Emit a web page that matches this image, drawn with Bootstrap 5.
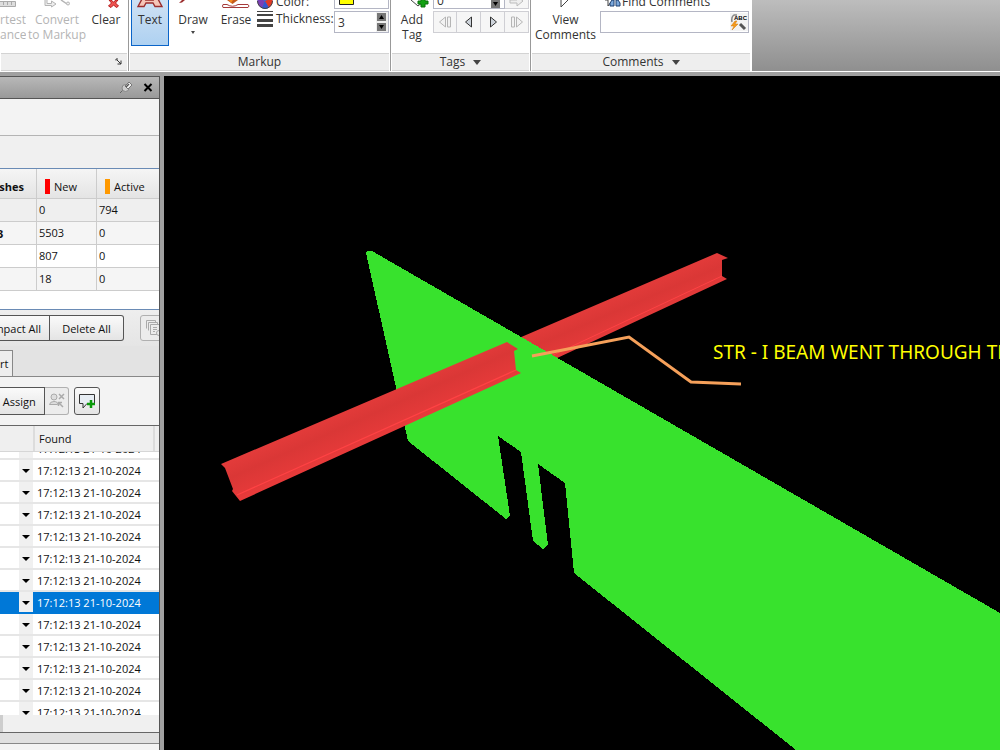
<!DOCTYPE html>
<html lang="en">
<head>
<meta charset="utf-8">
<meta name="viewport" content="width=device-width, initial-scale=1">
<title>Clash review</title>
<link rel="stylesheet" href="https://cdn.jsdelivr.net/npm/bootstrap@5.3.0/dist/css/bootstrap.min.css">
<script src="https://cdn.jsdelivr.net/npm/bootstrap@5.3.0/dist/js/bootstrap.bundle.min.js"></script>
<style>
body { font: 12px/15px "Open Sans", sans-serif; color: #333; background: #a0a0a0; }
svg { display: block; flex: none; }
button, input { font: inherit; color: inherit; }
/* ribbon */
.ribbon { background: linear-gradient(#bdbdbd, #8f8f8f); border-bottom: 1px solid #fff; }
.rib-panel { background: #fff; border-right: 1px solid #999; flex: none; }
.rib-panel:last-of-type { border-right-color: #fff; }
.p-measure { width: 129px; } .p-markup { width: 262px; } .p-tags { width: 140px; } .p-comments { width: 221px; }
.rib-body { height: 53px; }
.p-markup .rib-body { padding: 0 1px 0 2px; }
.rib-title { height: 18px; line-height: 16px; background: #eee; border-top: 1px solid #d3d3d3; border-bottom: 1px solid #d3d3d3; margin: 0 1px; }
.tool { border: 0; background: none; padding: 0; width: 38px; white-space: nowrap; flex: none; }
.tool:disabled { color: #b4b4b4; }
.tool.picked { background: linear-gradient(#cfe1f4, #aed1f1); border: 1px solid #0a64c8; border-top: 0; padding-bottom: 18px; }
.w-cut { width: 26px; } .w-convert { width: 62px; } .w-clear { width: 36px; } .w-draw { width: 48px; }
.w-tag { width: 42px; } .w-view { width: 69px; }
.line-opts { padding-left: 2px; }
.line-opts label { margin-left: 3px; }
.combo { width: 55px; }
.row-top { height: 9px; overflow: hidden; margin-bottom: 2px; }
.row-low { height: 22px; }
.field { border: 1px solid #b4b6c4; background: #fff; }
.field input { border: 0; background: none; min-width: 0; padding: 0 3px; outline: 0; }
.tag-no { width: 72px; height: 22px; }
.spin { width: 9px; height: 8px; background: #777; border: 0; padding: 0; }
.spins { padding: 0 2px 0 1px; background: #f0f0f0; }
.step { width: 24px; height: 22px; border: 1px solid #cfcfd4; border-left-width: 0; background: #f6f6f6; padding: 0; }
.step:first-child { border-left-width: 1px; }
.find { width: 149px; }
.arrow { width: 0; height: 0; border: 4px solid transparent; border-top: 5px solid #444; border-bottom: 0; }
.arrow-s { border-width: 3px 2px 0; }
/* clash panel */
.side { width: 160px; margin-right: 4px; border-right: 1px solid #555; background: #f3f3f3; color: #111; font-size: 11px; }
.side-head { height: 23px; border-top: 1px solid #555; border-bottom: 1px solid #555; background: linear-gradient(#b8b8b8, #999); }
.side-head button { border: 0; background: none; padding: 0; }
.band-a { height: 37px; border-bottom: 1px solid #b4b4b4; }
.band-b { height: 33px; border-bottom: 1px solid #6a8bb5; background: #f0f0f0; }
.tests { height: 141px; background: #fff; border-bottom: 1px solid #6a8bb5; }
.tests table { table-layout: fixed; width: 100%; border-collapse: separate; border-spacing: 0; }
.col-total { width: 37px; } .col-new { width: 60px; }
.tests th, .tests td { height: 23px; padding: 0 2px 1px; border: 0 solid #ccc; border-width: 0 1px 1px 0; font-weight: 400; white-space: nowrap; overflow: hidden; }
.tests th { height: 30px; padding: 6px 0 0 8px; background: linear-gradient(#f5f5f5, #e4e4e4); }
.tests th:first-child { font-weight: 700; padding: 6px 12px 0 0; }
.tests td:first-child { font-weight: 700; padding: 0; text-indent: -3px; }
.tests th:last-child, .tests td:last-child { border-right: 0; }
.tests tbody tr:nth-child(even) { background: #f5f5f5; }
.tests tbody tr:first-child { background: #efefef; }
.chip { width: 5px; height: 15px; }
.chip-new { background: #f00; } .chip-active { background: #ff9900; }
.acts { height: 36px; background: linear-gradient(#eee, #e5e5e5); padding-top: 5px; }
.tabs-line { height: 31px; background: #e3e3e3; border-bottom: 1px solid #888; }
.tab-cut { width: 13px; height: 26px; border: 1px solid #888; border-left: 0; border-bottom: 0; background: #eee; padding: 0; }
.bar { height: 49px; border-bottom: 1px solid #666; padding-top: 10px; background: #f3f3f3; }
.pbtn { border: 1px solid #555; border-radius: 3px; background: linear-gradient(#fafafa, #e4e4e4); height: 26px; padding: 0; white-space: nowrap; overflow: hidden; flex: none; }
.bar .pbtn { height: 28px; }
.pbtn.off { border-color: #b0b0b0; background: #ececec; }
.cut-l { border-left: 0; border-radius: 0; }
.b-compact { width: 50px; } .b-delete { width: 74px; } .b-group { width: 28px; }
.b-assign { width: 45px; } .b-unassign { width: 24px; } .b-comment { width: 26px; margin-left: 5px; }
.list-head { height: 26px; background: #efefef; border-bottom: 1px solid #d6d6d6; }
.list-head span { border-right: 2px solid #dcdcdc; }
.col-menu { width: 35px; }
.found-list { height: 263px; background: #fff; overflow: hidden; }
.found-row { height: 22px; border-bottom: 2px solid #e6e6e6; padding-left: 19px; }
.found-row.current { background: #0078d7; color: #fff; border-color: #0078d7; }
.found-row .dd { width: 14px; height: 20px; background: #f0f0f0; border: 0; padding: 2px 0 0 3px; margin-right: 4px; }
.dd .arrow { border-top: 4px solid #000; }
.hbar { height: 18px; border-bottom: 1px solid #666; background: #f0f0f0; }
.hbar div { width: 3px; background: #cdcdcd; }
.split { height: 11px; background: #e0e0e0; border-bottom: 1px solid #888; }
.scene { background: #000; min-width: 0; overflow: hidden; }
.note { font: 19px "Noto Sans", sans-serif; fill: #ff0; }
</style>
</head>
<body class="vh-100 d-flex flex-column overflow-hidden">
<header class="ribbon d-flex">
  <section class="rib-panel p-measure d-flex flex-column">
    <div class="rib-body d-flex align-items-start">
      <button class="tool w-cut text-start overflow-hidden" disabled>
        <svg width="18" height="12" viewBox="0 0 18 12"><path d="M-2 1.500H15.500V6.500H-2" fill="#ddd" stroke="#aaa"/><path d="M3.500 2v3M7.500 2v3M11.500 2v3" stroke="#aaa"/></svg>
        rtest<br>ance</button>
      <button class="tool w-convert" disabled>
        <svg class="mx-auto" width="30" height="12" viewBox="0 0 30 12"><path d="M5 0V3.500H9.500V1L14 4L9.500 7V5.500H3V0" fill="#eee" stroke="#b4b4b4"/><path d="M19 0L25 4" stroke="#b4b4b4" stroke-width="1.500"/><circle cx="26" cy="3.500" r="1.500" fill="#eee" stroke="#b4b4b4"/></svg>
        Convert<br>to Markup</button>
      <button class="tool w-clear">
        <svg class="ms-auto me-1" width="12" height="12" viewBox="0 0 12 12"><path d="M3 0L5.500 2L8 0H10L7.500 3L10.500 6L8.500 7.500L5.500 5L3 7.500L0.500 6L3.500 3L1 0Z" fill="#ef5350" stroke="#b71c1c"/></svg>
        Clear</button>
    </div>
    <div class="rib-title d-flex justify-content-end align-items-center pe-1"><svg width="8" height="8" viewBox="0 0 8 8"><path d="M1 2.500V1H3M2 2L6 6M2.500 6H6V2.500" stroke="#333" fill="none"/></svg></div>
  </section>
  <section class="rib-panel p-markup d-flex flex-column">
    <div class="rib-body d-flex align-items-start">
      <button class="tool picked">
        <svg class="mx-auto" width="28" height="12" viewBox="0 0 28 12"><path d="M6 -1L2 6.500H8L10 3H17L19 6.500H26L22 -1H16.500L17 0H10L10.500 -1Z" fill="#f6c5b8" stroke="#9b2d2d" stroke-width="1.400"/></svg>
        Text</button>
      <button class="tool w-draw">
        <svg class="mx-auto" width="28" height="12" viewBox="0 0 28 12"><path d="M0 3L4 -1L6 0L3 2.500Z" fill="#9b2d2d"/></svg>
        Draw<div class="arrow arrow-s mx-auto mt-1"></div></button>
      <button class="tool">
        <svg class="mx-auto" width="30" height="12" viewBox="0 0 30 12"><path d="M6 0H17L11.500 4Z" fill="#c45a1c"/><path d="M8 0H12L10 3Z" fill="#f68b1f"/><path d="M6 4.500H2Q1 6 2 7.500H27Q29 6 27 4.500H17Q11.500 8 6 4.500Z" fill="#fff" stroke="#a53a3a"/></svg>
        Erase</button>
      <div class="line-opts flex-grow-1">
        <div class="row-top d-flex align-items-end">
          <svg width="16" height="9" viewBox="0 7 16 9"><circle cx="8" cy="8" r="7.500" fill="#3f6fd0"/><path d="M8 8L1 5Q-1 12 5 15Z" fill="#7b3fb5"/><path d="M8 8L5 15Q9 17 12 14.500Z" fill="#3557cf"/><path d="M8 8L12 14.500Q17 11 15 5Z" fill="#e23a24"/><path d="M0.500 8A7.500 7.500 0 0 0 15.500 8" fill="none" stroke="#444"/></svg>
          <label for="swatch">Color:</label>
          <button id="swatch" class="field combo ms-auto p-0 ps-1" aria-label="Yellow"><svg width="15" height="9" viewBox="0 0 15 9"><path d="M.5 -1V5.500H14.500V-1" fill="#ff0" stroke="#222"/></svg></button>
        </div>
        <div class="row-low d-flex">
          <svg width="16" height="16" viewBox="0 0 16 16"><path d="M0 0h16v1H0zM0 3h16v2H0zM0 8h16v3H0zM0 13h16v3H0z" fill="#444"/></svg>
          <label class="text-nowrap" for="thick">Thickness:</label>
          <div class="field combo d-flex ms-auto flex-shrink-0"><input id="thick" class="w-100" value="3">
            <div class="spins d-flex flex-column justify-content-around">
              <button class="spin" aria-label="Up"><svg width="9" height="8"><path d="M2 6L4.500 2L7 6Z"/></svg></button>
              <button class="spin" aria-label="Down"><svg width="9" height="8"><path d="M2 2L4.500 6L7 2Z"/></svg></button>
            </div></div>
        </div>
      </div>
    </div>
    <div class="rib-title text-center">Markup</div>
  </section>
  <section class="rib-panel p-tags d-flex flex-column">
    <div class="rib-body d-flex align-items-start">
      <button class="tool w-tag">
        <svg class="ms-auto" width="26" height="12" viewBox="0 0 26 12"><path d="M4 0L11 6L17 1" fill="#fff" stroke="#444"/><path d="M11 1H14V-2H18V1H21V4H18V7H14V4H11Z" fill="#12a012" stroke="#087008"/></svg>
        Add<br>Tag</button>
      <div>
        <div class="row-top d-flex align-items-end">
          <div class="field tag-no d-flex align-items-end"><input class="w-100" value="0" aria-label="Tag number"><button class="spin me-1 flex-shrink-0" aria-label="Down"><svg width="9" height="8"><path d="M2 2L4.500 6L7 2Z"/></svg></button></div>
          <button class="step" disabled aria-label="Go"><svg class="mx-auto" width="16" height="18"><path d="M1 11H8V7L14 12L8 17V14H1Z" fill="#eee" stroke="#bbb"/></svg></button>
        </div>
        <div class="row-low d-flex">
          <button class="step" disabled aria-label="First"><svg class="mx-auto" width="14" height="14"><path d="M7.500 2V12L1.500 7ZM9.500 2h3v10h-3z" fill="#f2f2f2" stroke="#b5b5b5"/></svg></button>
          <button class="step" aria-label="Previous"><svg class="mx-auto" width="14" height="14"><path d="M9.500 2V12L3.500 7Z" fill="#cdd3da" stroke="#333"/></svg></button>
          <button class="step" aria-label="Next"><svg class="mx-auto" width="14" height="14"><path d="M4.500 2V12L10.500 7Z" fill="#cdd3da" stroke="#333"/></svg></button>
          <button class="step" disabled aria-label="Last"><svg class="mx-auto" width="14" height="14"><path d="M6.500 2V12L12.500 7ZM1.500 2h3v10h-3z" fill="#f2f2f2" stroke="#b5b5b5"/></svg></button>
        </div>
      </div>
    </div>
    <div class="rib-title d-flex justify-content-center align-items-center"><span class="me-2">Tags</span><span class="arrow"></span></div>
  </section>
  <section class="rib-panel p-comments d-flex flex-column">
    <div class="rib-body d-flex align-items-start">
      <button class="tool w-view"><svg class="mx-auto" width="20" height="12"><path d="M5 0V7L12 0" fill="#fff" stroke="#444"/></svg>View<br>Comments</button>
      <div class="find">
        <div class="row-top d-flex align-items-end ps-1">
          <svg width="18" height="9" viewBox="0 0 18 9"><path d="M1 0H4V6L7 2" fill="none" stroke="#444"/><path d="M6 6V3L8 0H10V6ZM12 6V0H14L16 3V6Z" fill="#7aa8dc" stroke="#1d3f6e"/></svg>
          <label for="find">Find Comments</label></div>
        <div class="row-low field d-flex align-items-center"><input id="find" class="w-100">
          <svg width="18" height="18" viewBox="0 0 18 18"><rect width="18" height="18" fill="#f3f3f3"/><path d="M7 2H4Q1 4 2 9" fill="none" stroke="#888" stroke-width="1.500"/><path d="M10 11L15 16" stroke="#555" stroke-width="3"/><path d="M5 8L1 13H4L2 17L8 11H5L7 8Z" fill="#f59a1c" stroke="#d37b0a" stroke-width=".5"/><text x="4" y="7" font-size="6" font-weight="700" font-family="Liberation Sans, sans-serif" fill="#000">ABC</text></svg>
        </div>
      </div>
    </div>
    <div class="rib-title d-flex justify-content-center align-items-center"><span class="me-2">Comments</span><span class="arrow"></span></div>
  </section>
</header>

<div class="d-flex flex-grow-1 mt-1 overflow-hidden">
  <aside class="side flex-shrink-0 overflow-hidden">
    <div class="side-head d-flex justify-content-end align-items-center gap-2 pe-1">
      <button aria-label="Pin"><svg width="14" height="14" viewBox="0 0 14 14"><path d="M1 12L5 8" stroke="#666"/><circle cx="6.500" cy="7" r="3.500" fill="#ccc" stroke="#888"/><path d="M6 5L10 1L13 4L9 8Z" fill="#eee" stroke="#777"/><path d="M7 6L10 3" stroke="#555" stroke-width="1.500"/></svg></button>
      <button aria-label="Close"><svg width="14" height="12" viewBox="0 0 14 12"><path d="M3.500 2L10.500 9M10.500 2L3.500 9" stroke="#000" stroke-width="2"/></svg></button>
    </div>
    <div class="band-a"></div>
    <div class="band-b"></div>
    <div class="tests">
      <table>
        <colgroup><col class="col-total"><col class="col-new"><col></colgroup>
        <thead><tr><th><div class="d-flex justify-content-end">ashes</div></th><th><div class="d-flex align-items-center gap-1"><i class="chip chip-new"></i>New</div></th><th><div class="d-flex align-items-center gap-1"><i class="chip chip-active"></i>Active</div></th></tr></thead>
        <tbody>
          <tr><td></td><td>0</td><td>794</td></tr>
          <tr><td>3</td><td>5503</td><td>0</td></tr>
          <tr><td></td><td>807</td><td>0</td></tr>
          <tr><td></td><td>18</td><td>0</td></tr>
        </tbody>
      </table>
    </div>
    <div class="acts d-flex">
      <button class="pbtn b-compact cut-l d-flex justify-content-end align-items-center pe-2">mpact All</button>
      <button class="pbtn b-delete rounded-start-0 border-start-0">Delete All</button>
      <button class="pbtn b-group off ms-3 ps-1" aria-label="Group" disabled><svg width="18" height="18" viewBox="0 0 18 18"><path d="M1.500 9.500V1.500H10.500V3.500M3.500 11.500V3.500H12.500V5.500M5.500 5.500H14.500V15.500H5.500ZM8 8.500H12M8 10.500H12M8 12.500H10" fill="none" stroke="#aaa"/><circle cx="14" cy="14" r="2.500" fill="#ececec" stroke="#aaa"/></svg></button>
    </div>
    <div class="tabs-line d-flex align-items-end"><button class="tab-cut text-start overflow-hidden">rt</button></div>
    <div class="bar d-flex">
      <button class="pbtn b-assign cut-l text-start">&nbsp;Assign</button>
      <button class="pbtn b-unassign off rounded-start-0 border-start-0 ps-1" aria-label="Unassign" disabled><svg width="16" height="18" viewBox="0 0 16 18"><circle cx="5" cy="5" r="3" fill="#ddd" stroke="#aaa"/><path d="M.5 12.500Q1 9.500 5 9.500T8.500 12.500Z" fill="#ddd" stroke="#aaa"/><path d="M10 2L15 7M15 2L10 7M9.500 14V10.500H13M10 11L14 15" stroke="#aaa" stroke-width="1.500" fill="none"/></svg></button>
      <button class="pbtn b-comment" aria-label="Add comment"><svg class="mx-auto" width="18" height="18" viewBox="0 0 18 18"><path d="M1.500 2.500H16.500V11.500H9L5 16V11.500H1.500Z" fill="#e7edf3" stroke="#333"/><path d="M9 12H17M13 8V16" stroke="#0a9a0a" stroke-width="2.500"/></svg></button>
    </div>
    <div class="list-head d-flex align-items-stretch"><span class="col-menu"></span><span class="flex-grow-1 ps-1 me-1 d-flex align-items-center">Found</span></div>
    <div class="found-list d-flex flex-column" id="found"></div>
    <div class="hbar d-flex"><div></div></div>
    <div class="split"></div>
  </aside>

  <main class="scene flex-grow-1">
    <svg class="w-100 h-100" viewBox="164 76 836 674" preserveAspectRatio="xMinYMin slice" role="img" aria-label="Beam passing through a wall">
      <defs><linearGradient id="steel" gradientUnits="userSpaceOnUse" x1="366" y1="400" x2="384" y2="440"><stop offset="0" stop-color="#e33b3a"/><stop offset=".35" stop-color="#da3736"/><stop offset="1" stop-color="#ea3b3b"/></linearGradient>
      <linearGradient id="steel2" gradientUnits="userSpaceOnUse" x1="620" y1="293" x2="635" y2="328"><stop offset="0" stop-color="#e33b3a"/><stop offset=".4" stop-color="#da3736"/><stop offset="1" stop-color="#e83b3b"/></linearGradient></defs>
      <path d="M519 338L717 253L728 258L722 260V276L727 279L555 359Z" fill="url(#steel2)"/>
      <path d="M549 357L722 276" stroke="#ff4244"/>
      <path shape-rendering="crispEdges" d="M366 253L367 251H372L1000 613L1400 844L1400 1232L796 750L574 573L565 483L538 464L548 545L543 549L533 541L521 452L498 436L510 516L506 519L408 441Z" fill="#38e22d"/>
      <path d="M221 464L507 342L518 349L514 351L516 370L521 373L240 501L232 491L233 489L225 468Z" fill="url(#steel)"/>
      <path d="M237 495L516 370" stroke="#ff4244" stroke-width="1.300"/>
      <path d="M532 356L629 337L691 382L741 384" fill="none" stroke="#f5a05a" stroke-width="3"/>
      <text class="note" x="713" y="359">STR - I BEAM WENT THROUGH THE WALL</text>
    </svg>
  </main>
</div>
<script>
const list = document.getElementById('found');
for (let i = 0; i < 13; i++) {
  const row = document.createElement('div');
  row.className = 'found-row flex-shrink-0 d-flex align-items-center' + (i === 7 ? ' current' : '');
  row.innerHTML = '<button class="dd" aria-label="Options"><span class="arrow d-block"></span></button><span>17:12:13 21-10-2024</span>';
  list.append(row);
}
list.scrollTop = 14;
</script>
</body>
</html>
